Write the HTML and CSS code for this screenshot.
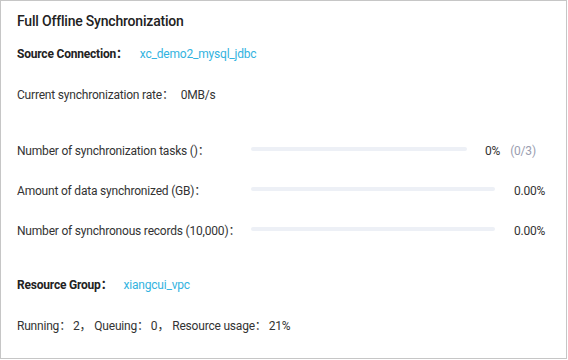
FILE: index.html
```html
<!DOCTYPE html>
<html>
<head>
<meta charset="utf-8">
<link rel="stylesheet" href="styles.css">
</head>
<body>
<div class="card">
  <div class="title">Full Offline Synchronization</div>
  <div class="line source"><span class="label-b">Source Connection：</span><span class="link link-src">xc_demo2_mysql_jdbc</span></div>
  <div class="line rate"><span>Current synchronization rate：</span><span class="val">0MB/s</span></div>
  <div class="prog-list">
    <div class="prog-row">
      <span class="plabel">Number of synchronization tasks ()：</span>
      <span class="bar bar-short"><span class="fill" style="width:0%"></span></span>
      <span class="pval">0%</span>
      <span class="pextra">(0/3)</span>
    </div>
    <div class="prog-row">
      <span class="plabel">Amount of data synchronized (GB)：</span>
      <span class="bar bar-long"><span class="fill" style="width:0%"></span></span>
      <span class="pval pval-long">0.00%</span>
    </div>
    <div class="prog-row">
      <span class="plabel">Number of synchronous records (10,000)：</span>
      <span class="bar bar-long"><span class="fill" style="width:0%"></span></span>
      <span class="pval pval-long">0.00%</span>
    </div>
  </div>
  <div class="line group"><span class="label-b">Resource Group：</span><span class="link">xiangcui_vpc</span></div>
  <div class="line usage"><span>Running：</span><span class="num">2</span><span class="sep">，</span><span>Queuing：</span><span class="num">0</span><span class="sep">，</span><span>Resource usage：</span><span class="num">21%</span></div>
</div>
</body>
</html>
```
FILE: styles.css
```css
html, body {
  margin: 0;
  padding: 0;
  background: #ffffff;
}
body {
  font-family: Roboto, "Noto Sans CJK SC", sans-serif;
  color: #333333;
  font-size: 12px;
  letter-spacing: -0.2px;
}
.card {
  box-sizing: border-box;
  width: 567px;
  height: 359px;
  border: 1px solid #c6c6c6;
  padding: 10px 17px 0 16px;
}
.title {
  font-size: 14px;
  font-weight: 500;
  line-height: 20px;
  height: 20px;
  color: #222222;
}
.line {
  line-height: 20px;
  height: 20px;
  white-space: nowrap;
}
.source { margin-top: 13px; }
.rate { margin-top: 21px; }
.label-b {
  font-weight: 700;
  color: #222222;
}
.link {
  color: #33b3e0;
  margin-left: 11px;
}
.link-src { margin-left: 12px; }
.val { margin-left: 7px; }
.prog-list {
  margin-top: 36px;
  display: flex;
  flex-direction: column;
  gap: 20px;
}
.prog-row {
  display: flex;
  align-items: center;
  height: 20px;
  line-height: 20px;
  white-space: nowrap;
}
.plabel {
  width: 234px;
  flex: none;
}
.bar {
  flex: none;
  height: 4px;
  border-radius: 2px;
  background: #edf0f6;
  position: relative;
  top: -2px;
  overflow: hidden;
}
.fill {
  display: block;
  height: 100%;
  background: #33b3e0;
}
.bar-short { width: 216px; }
.bar-long { width: 244px; }
.pval { margin-left: 18px; }
.pval-long { margin-left: 19px; }
.pextra {
  margin-left: 10px;
  color: #9a9db0;
}
.group { margin-top: 34px; }
.usage { margin-top: 21px; }
.num { margin-left: 2px; }
.sep { margin-right: 3px; }
```
